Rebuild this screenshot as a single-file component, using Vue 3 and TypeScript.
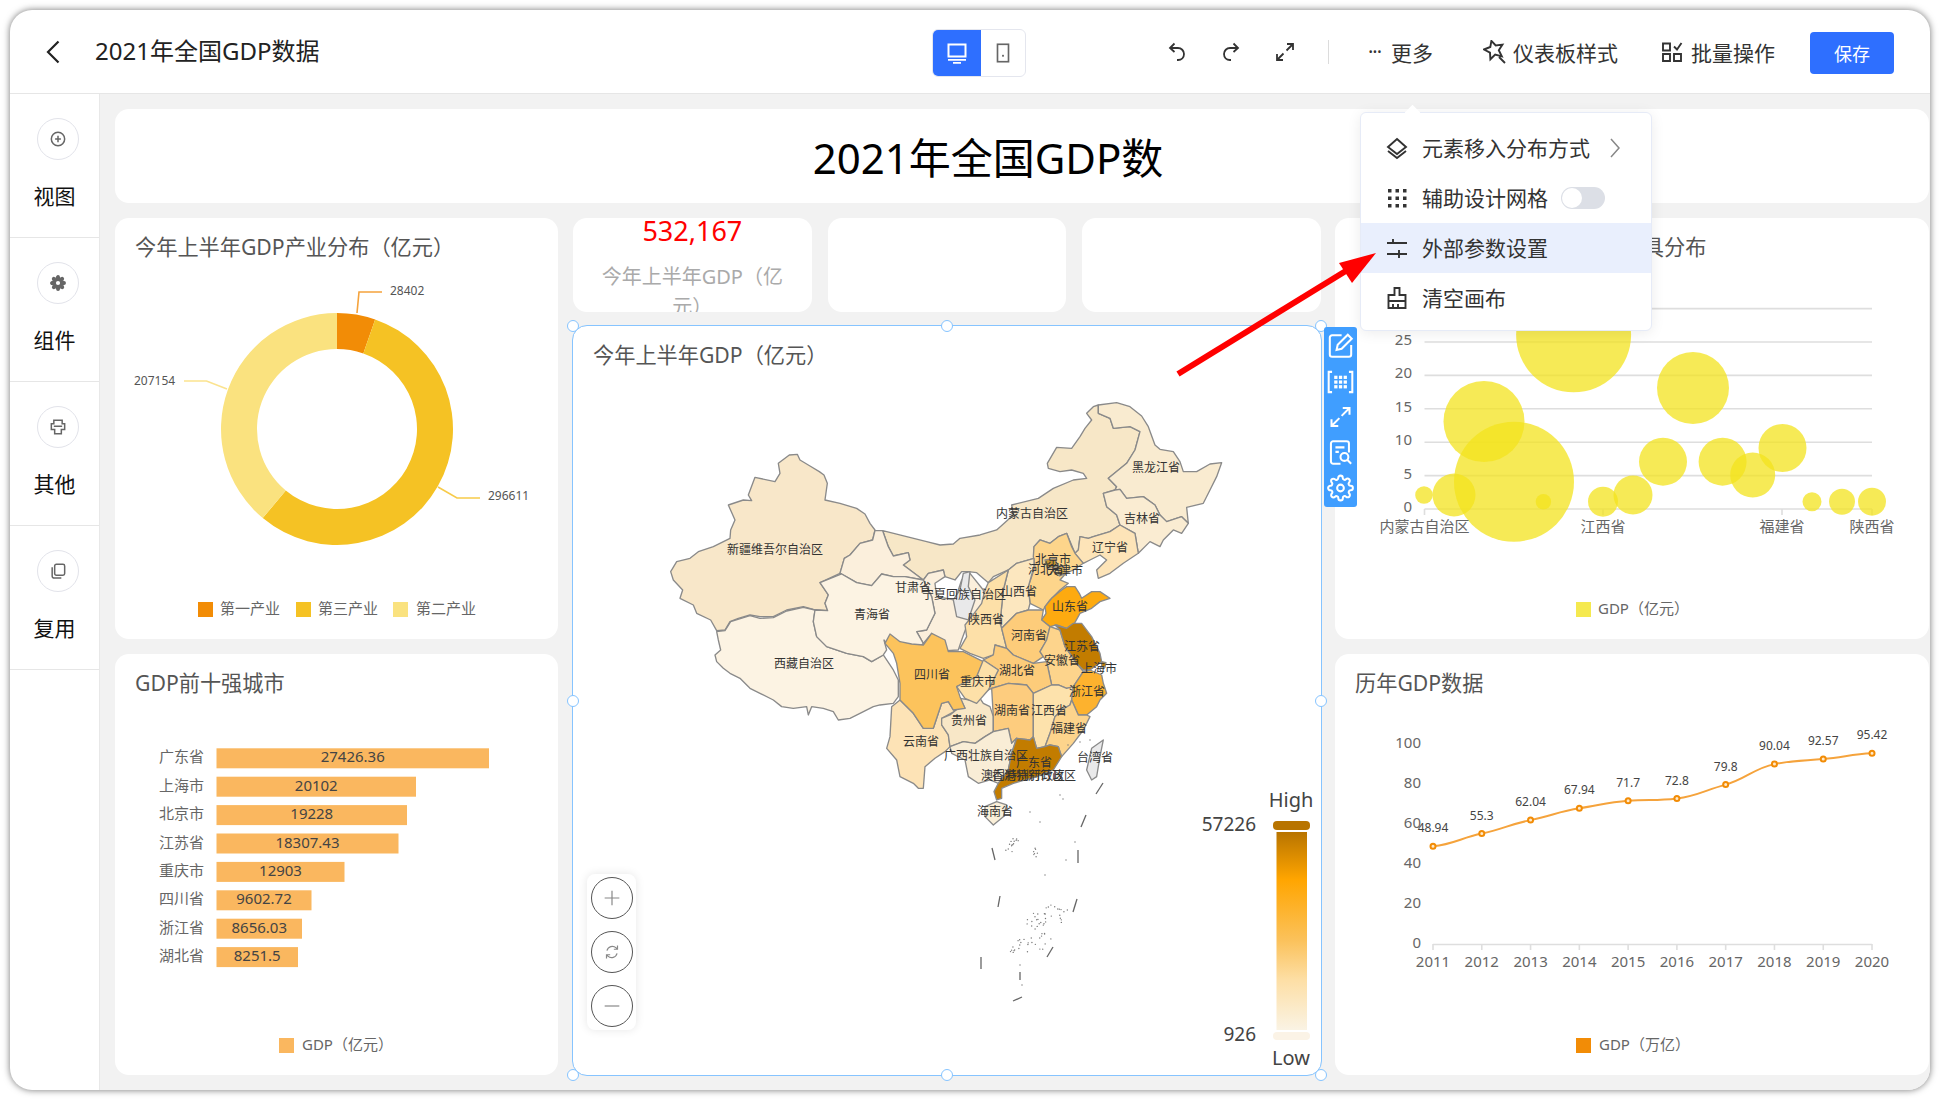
<script setup lang="ts">
type Poly = { g: 'w' | 'n' | 's'; fill: string; pts: string }

const groupTransform: Record<string, string> = {
  w: 'translate(660 440) scale(.3333)',
  n: 'translate(960 390) scale(.3333)',
  s: 'translate(870 620) scale(.3333)',
}

const polys: Poly[] = [
  { g: 'n', fill: '#f7e7c7', pts: '-232,422 -160,440 -100,455 -60,465 -20,462 0,445 60,435 110,420 160,375 155,345 235,325 280,295 340,270 380,265 370,250 335,240 300,245 265,235 262,220 290,172 335,175 360,140 375,115 395,90 380,70 400,50 415,45 415,70 450,85 460,115 510,110 540,125 525,180 500,220 445,265 470,290 465,300 430,310 440,350 470,375 480,405 450,425 400,440 385,445 360,440 355,480 345,490 320,430 295,440 270,460 240,450 222,470 222,505 170,520 145,540 100,560 85,578 50,548 25,545 5,545 -15,570 -45,560 -50,540 -95,550 -110,570 -170,525 -150,510 -155,488 -200,498 -215,470' },
  { g: 'w', fill: '#f8e7c9', pts: '388,45 412,43 420,60 450,78 478,95 492,105 502,130 495,180 540,190 590,205 615,222 630,250 645,270 638,300 600,310 570,345 553,355 540,400 480,428 505,465 495,490 503,512 460,508 430,500 380,510 340,530 300,530 270,525 235,535 210,545 195,570 170,572 152,540 110,520 100,495 60,475 68,450 40,420 32,395 50,365 90,355 115,335 160,320 210,295 212,270 225,240 205,195 250,180 275,182 265,165 285,112 345,125 360,100 355,70' },
  { g: 'w', fill: '#fcf3e3', pts: '170,575 195,572 212,545 270,527 300,535 340,533 380,513 430,502 465,510 460,545 470,590 500,620 560,640 610,650 635,665 670,645 700,690 715,720 715,770 700,790 660,795 640,800 600,820 570,835 535,840 520,815 490,805 455,800 445,825 440,800 400,805 365,800 340,780 300,760 270,745 240,715 210,700 190,685 170,665 165,645 182,630 175,600' },
  { g: 'w', fill: '#fbefdc', pts: '645,272 668,272 685,320 700,348 745,338 750,360 730,375 790,420 805,400 850,390 855,410 825,430 830,470 885,480 905,420 930,400 970,450 980,520 925,545 905,600 895,630 860,632 830,600 815,580 790,610 770,575 800,570 825,520 815,470 790,420 735,410 700,410 665,402 635,437 590,428 545,402 540,400 553,355 570,345 600,310 638,300' },
  { g: 'w', fill: '#fcf3e3', pts: '480,428 545,402 590,428 635,437 665,402 700,410 735,410 790,420 815,470 825,520 800,570 770,575 790,610 770,632 745,630 690,625 672,600 680,630 670,645 635,665 610,650 560,640 500,620 470,590 460,545 465,510 503,512 495,490 505,465' },
  { g: 'n', fill: '#f9ebd0', pts: '415,45 470,38 510,50 545,78 565,110 585,165 600,178 640,185 660,215 670,245 710,245 750,222 785,218 770,260 750,300 730,340 680,352 685,400 665,380 620,395 600,375 585,345 550,320 500,325 480,298 465,300 470,290 445,265 500,220 525,180 540,125 510,110 460,115 450,85 415,70' },
  { g: 'n', fill: '#faecd2', pts: '430,310 465,300 480,298 500,325 550,320 585,345 600,375 620,395 665,380 685,400 665,430 640,420 610,450 600,470 570,455 535,490 525,430 480,405 470,375 440,350' },
  { g: 'n', fill: '#fde4b8', pts: '480,405 525,430 535,490 490,520 450,550 415,565 410,540 440,510 420,495 390,510 370,520 345,490 355,480 360,440 385,445 400,440 450,425' },
  { g: 'n', fill: '#fdd58b', pts: '222,470 240,450 270,460 295,440 320,430 335,470 345,490 370,520 340,540 318,550 300,570 325,580 300,600 270,630 255,650 250,660 210,640 205,590 225,530 220,500' },
  { g: 'n', fill: '#fce7bf', pts: '145,540 170,520 222,505 222,530 205,590 210,640 205,660 170,670 125,715 120,700 125,650 130,600' },
  { g: 's', fill: '#fde0a8', pts: '355,-112 415,-150 400,-90 395,-40 390,10 395,25 410,85 375,75 370,105 340,115 300,100 270,85 290,50 285,15 305,-10 335,-50 345,-90' },
  { g: 'w', fill: '#e9e9ea', pts: '910,400 930,395 925,440 945,480 925,540 890,530 880,480 900,450' },
  { g: 'n', fill: '#fdaa10', pts: '255,650 275,625 305,600 320,590 345,590 358,610 365,625 395,605 420,605 450,625 420,635 395,655 360,670 335,715 320,715 290,705 270,710 245,690 258,670' },
  { g: 's', fill: '#fdcc7a', pts: '395,25 440,-20 475,-30 520,-30 515,0 540,20 530,60 510,95 520,110 490,130 430,105 410,85' },
  { g: 's', fill: '#fdd48c', pts: '530,60 540,20 570,30 585,80 620,130 640,155 610,200 590,205 565,195 545,195 530,125 520,110 510,95' },
  { g: 's', fill: '#c27c00', pts: '555,15 590,25 610,10 635,10 665,50 690,100 695,125 660,150 640,150 620,130 600,100 585,80 570,30' },
  { g: 's', fill: '#fdcc7a', pts: '370,105 375,75 410,85 430,105 490,130 530,125 545,195 490,220 470,195 415,190 365,205 355,210 385,150 340,120' },
  { g: 's', fill: '#fde3b6', pts: '65,260 90,240 130,280 160,325 190,325 215,250 235,245 250,270 265,268 215,295 215,315 235,345 240,380 225,395 195,415 165,440 160,505 145,505 130,490 90,470 80,420 50,385 60,350' },
  { g: 's', fill: '#f8e7c7', pts: '215,295 240,285 265,265 285,265 270,235 300,240 320,220 340,250 360,260 370,290 370,335 345,350 315,370 280,365 240,380 235,345 215,315' },
  { g: 's', fill: '#fcc35c', pts: '45,70 60,42 90,65 125,72 160,75 185,40 225,60 235,95 280,95 340,125 320,170 300,180 260,200 270,230 285,265 250,270 235,245 215,250 190,325 160,325 130,280 90,240 90,190 80,130 70,100' },
  { g: 's', fill: '#fde0a8', pts: '340,120 385,150 355,210 320,250 285,235 260,200 300,180 320,170' },
  { g: 's', fill: '#fdcc7e', pts: '365,205 415,190 470,195 490,220 490,290 490,350 480,360 440,355 425,370 415,325 370,335 370,290' },
  { g: 's', fill: '#fde2ac', pts: '490,220 545,195 565,195 590,205 610,200 605,240 600,255 575,270 555,290 540,340 525,380 500,385 490,350 490,290' },
  { g: 's', fill: '#fdb22e', pts: '640,155 660,150 695,165 700,190 710,220 690,240 680,260 650,285 625,285 605,240 610,200' },
  { g: 's', fill: '#fdd48c', pts: '605,240 625,285 650,285 660,290 640,330 610,370 575,410 565,380 540,375 525,380 540,340 555,290 575,270 600,255' },
  { g: 's', fill: '#f9edd6', pts: '240,380 280,365 315,370 345,350 370,335 415,325 425,370 440,355 425,400 415,450 385,490 360,480 325,490 295,470 285,420 245,400' },
  { g: 's', fill: '#c27c00', pts: '440,355 480,360 490,350 500,385 525,380 540,375 565,380 575,410 550,450 500,470 430,490 395,505 395,535 380,540 372,515 385,490 415,450 425,400' },
  { g: 's', fill: '#faefd8', pts: '345,560 380,545 410,555 400,590 370,615 345,590' },
  { g: 's', fill: '#e9e9ea', pts: '665,385 700,360 690,410 680,470 665,480 650,450' },
  { g: 's', fill: '#c27c00', pts: '695,125 708,128 705,142 695,140' },
  { g: 'n', fill: '#c9962f', pts: '255,510 285,505 292,530 262,535' },
  { g: 'n', fill: '#d9a84a', pts: '292,528 312,530 316,552 298,558' },
]

const mapLabels: [string, number, number][] = [
  ['新疆维吾尔自治区', 775, 550], ['西藏自治区', 804, 664], ['青海省', 872, 615], ['甘肃省', 913, 588],
  ['宁夏回族自治区', 964, 595], ['山西省', 1019, 592], ['陕西省', 986, 620], ['内蒙古自治区', 1032, 514],
  ['黑龙江省', 1156, 468], ['吉林省', 1142, 519], ['辽宁省', 1110, 548], ['北京市', 1053, 560],
  ['河北省', 1046, 570], ['天津市', 1065, 571], ['山东省', 1070, 607], ['河南省', 1029, 636],
  ['江苏省', 1082, 647], ['安徽省', 1062, 661], ['上海市', 1099, 669], ['四川省', 932, 675],
  ['重庆市', 978, 682], ['湖北省', 1017, 671], ['浙江省', 1087, 692], ['湖南省', 1012, 711],
  ['江西省', 1049, 711], ['贵州省', 969, 721], ['福建省', 1069, 729], ['云南省', 921, 742],
  ['广西壮族自治区', 986, 756], ['广东省', 1034, 763], ['台湾省', 1095, 758], ['澳门特别行政区', 1023, 776],
  ['香港特别行政区', 1034, 776], ['海南省', 995, 812],
]

const dashes: number[][] = [
  [1103, 783, 1096, 794], [1086, 815, 1081, 827], [1078, 850, 1078, 863], [1077, 899, 1073, 912],
  [1053, 947, 1047, 957], [981, 957, 981, 969], [992, 848, 995, 860], [1000, 896, 998, 907],
  [1013, 1001, 1022, 997], [1020, 972, 1020, 980],
]

function cluster(x0: number, y0: number, w: number, h: number, n: number, seed: number): number[][] {
  const out: number[][] = []
  let s = seed
  for (let i = 0; i < n; i++) {
    s = (s * 9301 + 49297) % 233280
    const a = s / 233280
    s = (s * 9301 + 49297) % 233280
    const b = s / 233280
    out.push([x0 + a * w - (b * h) * 0.55, y0 + b * h])
  }
  return out
}
const dots = [
  ...cluster(1012, 838, 8, 14, 14, 7),
  ...cluster(1034, 848, 8, 9, 7, 31),
  ...cluster(1035, 905, 36, 48, 60, 17),
  [1075, 842], [1066, 860], [1045, 875], [1020, 965], [1022, 985],
  [1060, 795], [1063, 799], [1030, 812], [1040, 822], [1068, 745], [1080, 742], [1090, 740],
]

const donutC = { x: 337, y: 429, R: 116, r: 80 }
function arc(a0: number, a1: number): string {
  const { x, y, R, r } = donutC
  const p = (rad: number, a: number) => {
    const t = ((a - 90) * Math.PI) / 180
    return `${(x + rad * Math.cos(t)).toFixed(2)} ${(y + rad * Math.sin(t)).toFixed(2)}`
  }
  const large = a1 - a0 > 180 ? 1 : 0
  return `M${p(R, a0)}A${R} ${R} 0 ${large} 1 ${p(R, a1)}L${p(r, a1)}A${r} ${r} 0 ${large} 0 ${p(r, a0)}Z`
}
const donut = [
  { d: arc(0, 19.2), fill: '#f28c06' },
  { d: arc(19.2, 219.8), fill: '#f5c224' },
  { d: arc(219.8, 360), fill: '#fae27f' },
]

const bars = [
  { name: '广东省', value: '27426.36', right: 489 },
  { name: '上海市', value: '20102', right: 416 },
  { name: '北京市', value: '19228', right: 407 },
  { name: '江苏省', value: '18307.43', right: 398.5 },
  { name: '重庆市', value: '12903', right: 344.5 },
  { name: '四川省', value: '9602.72', right: 311.5 },
  { name: '浙江省', value: '8656.03', right: 302 },
  { name: '湖北省', value: '8251.5', right: 298 },
].map((b, i) => ({ ...b, y: 748.3 + i * 28.4, x: 216.5, w: b.right - 216.5 }))

const bubbleY = [0, 5, 10, 15, 20, 25, 30].map((v) => ({ v, y: 509 - v * 6.68 }))
const bubbles: [number, number, number][] = [
  [1424, 495, 8.8], [1454, 495, 21.5], [1514, 481.7, 60], [1484, 421.5, 40.5], [1573.6, 334.8, 57.5],
  [1543.4, 501.7, 7.7], [1603, 501.7, 15], [1633, 495, 19.5], [1663, 461.7, 24], [1693, 388, 36],
  [1722.6, 461.7, 24], [1752.7, 475, 22.5], [1782.5, 448, 24], [1812, 501.7, 9.5], [1842, 501.7, 13], [1872, 501.7, 14],
]
const bubbleX = [
  { t: '内蒙古自治区', x: 1424.5 }, { t: '江西省', x: 1603 }, { t: '福建省', x: 1782 }, { t: '陕西省', x: 1872 },
]

const years = [
  [2011, 48.94], [2012, 55.3], [2013, 62.04], [2014, 67.94], [2015, 71.7],
  [2016, 72.8], [2017, 79.8], [2018, 90.04], [2019, 92.57], [2020, 95.42],
].map(([year, v], i) => ({ year, v, x: 1433 + i * 48.78, y: 944.2 - 2 * v }))

const linePath = years.reduce((acc, p, i) => {
  if (i === 0) return `M${p.x} ${p.y}`
  const prev = years[i - 1]
  const before = years[i - 2] ?? prev
  const next = years[i + 1] ?? p
  const c1y = prev.y + (p.y - before.y) * 0.16
  const c2y = p.y - (next.y - prev.y) * 0.16
  const dx = (p.x - prev.x) / 2.4
  return `${acc}C${prev.x + dx} ${c1y} ${p.x - dx} ${c2y} ${p.x} ${p.y}`
}, '')

const lineYAxis = [0, 20, 40, 60, 80, 100].map((v) => ({ v, y: 942.7 - v * 2 }))

const sideItems = ['视图', '组件', '其他', '复用']
const handles = [
  { l: '0%', t: '0%' }, { l: '50%', t: '0%' }, { l: '100%', t: '0%' },
  { l: '0%', t: '50%' }, { l: '100%', t: '50%' },
  { l: '0%', t: '100%' }, { l: '50%', t: '100%' }, { l: '100%', t: '100%' },
]
const gridSquares = [6.4, 10.6, 14.8].flatMap((y) => [6.4, 10.6, 14.8].map((x) => ({ x, y })))
const gearPath =
  'M19.4 15a1.65 1.65 0 0 0 .33 1.82l.06.06a2 2 0 0 1 0 2.83 2 2 0 0 1-2.83 0l-.06-.06a1.65 1.65 0 0 0-1.82-.33 1.65 1.65 0 0 0-1 1.51V21a2 2 0 0 1-2 2 2 2 0 0 1-2-2v-.09A1.65 1.65 0 0 0 9 19.4a1.65 1.65 0 0 0-1.82.33l-.06.06a2 2 0 0 1-2.83 0 2 2 0 0 1 0-2.83l.06-.06a1.65 1.65 0 0 0 .33-1.82 1.65 1.65 0 0 0-1.51-1H3a2 2 0 0 1-2-2 2 2 0 0 1 2-2h.09A1.65 1.65 0 0 0 4.6 9a1.65 1.65 0 0 0-.33-1.82l-.06-.06a2 2 0 0 1 0-2.83 2 2 0 0 1 2.83 0l.06.06a1.65 1.65 0 0 0 1.82.33H9a1.65 1.65 0 0 0 1-1.51V3a2 2 0 0 1 2-2 2 2 0 0 1 2 2v.09a1.65 1.65 0 0 0 1 1.51 1.65 1.65 0 0 0 1.82-.33l.06-.06a2 2 0 0 1 2.83 0 2 2 0 0 1 0 2.83l-.06.06a1.65 1.65 0 0 0-.33 1.82V9a1.65 1.65 0 0 0 1.51 1H21a2 2 0 0 1 2 2 2 2 0 0 1-2 2h-.09a1.65 1.65 0 0 0-1.51 1z'
</script>

<template>
  <div class="window">
    <header class="header">
      <div class="head-left">
        <svg class="back" viewBox="0 0 14 24"><path d="M12.5 1.5 2 12l10.5 10.5" /></svg>
        <span class="doc-title">2021年全国GDP数据</span>
      </div>
      <div class="device">
        <div class="device-on">
          <svg viewBox="0 0 24 24" width="24" height="24"><path d="M3.5 3.5h17v12h-17z" fill="none" stroke="#fff" stroke-width="2" /><path d="M3 18h18v1.800H3zM8 21h8v1.800H8z" fill="#fff" /></svg>
        </div>
        <div class="device-off">
          <svg viewBox="0 0 24 24" width="22" height="22"><rect x="6" y="2.500" width="12" height="19" fill="none" stroke="#666" stroke-width="1.800" /><rect x="11" y="14" width="2" height="2" fill="#666" /></svg>
        </div>
      </div>
      <div class="tools">
        <svg class="tool" viewBox="0 0 24 24"><path d="M9.500 3.500 5 8l4.500 4M5.500 8H13a6 6 0 0 1 6 6c0 3.500-2.500 6-6 6h-1" /></svg>
        <svg class="tool" viewBox="0 0 24 24"><path d="M14.500 3.500 19 8l-4.500 4M18.500 8H11a6 6 0 0 0-6 6c0 3.500 2.500 6 6 6h1" /></svg>
        <svg class="tool" viewBox="0 0 24 24"><path d="M14 4h6v6M20 4l-6.500 6.500M10 20H4v-6M4 20l6.500-6.500" /></svg>
      </div>
      <div class="divider"></div>
      <div class="act act-more"><span class="dots">···</span><span>更多</span></div>
      <div class="act act-style">
        <svg class="act-icon" viewBox="0 0 24 24"><path d="M8.400.9 12.700 5.500l6.700-.9-3.600 5.600 3 6.100-6.600-1.700-4.800 4.700-.4-6.700-6-3.100L7.300 7zM16 17l6 6" /></svg>
        <span>仪表板样式</span>
      </div>
      <div class="act act-batch">
        <svg class="act-icon" viewBox="0 0 24 24"><path d="M3 3.500h7v7H3zM3 14h7v7H3zM14 14h7v7h-7zM14 6.500l3 3 4.500-6.500" /></svg>
        <span>批量操作</span>
      </div>
      <button class="save">保存</button>
    </header>

    <div class="body">
      <aside class="side">
        <div v-for="(item, i) in sideItems" :key="item" class="side-item">
          <div class="side-circle">
            <svg viewBox="0 0 24 24" width="20" height="20" class="side-icon">
              <g v-if="i === 0"><circle cx="12" cy="12" r="8" /><path d="M12 8v8M8.500 12h7" /></g>
              <g v-else-if="i === 1"><path :d="gearPath" transform="translate(2.400 2.400) scale(.8)" fill="#666" stroke="#666" /><circle cx="12" cy="12" r="2.500" fill="#fff" stroke="none" /></g>
              <g v-else-if="i === 2"><path d="M7 4h10v4h3v7h-4v5H8v-5H4V8h3zM7 11h10" /></g>
              <g v-else><rect x="8" y="4" width="12" height="13" rx="2" /><path d="M5 7.500V18a2.500 2.500 0 0 0 2.500 2.500H16" /></g>
            </svg>
          </div>
          <div class="side-label">{{ item }}</div>
        </div>
      </aside>

      <main class="canvas">
        <div class="title-card"><h1>2021年全国GDP数</h1></div>
        <div class="columns">
          <div class="col col-side">
            <section class="card">
              <div class="card-title">今年上半年GDP产业分布（亿元）</div>
              <svg class="chart" viewBox="115 276 443 363">
                <path v-for="s in donut" :key="s.fill" :d="s.d" :fill="s.fill" />
                <path d="M357 313 359 292H382" class="lead" stroke="#f5a33c" />
                <path d="M227 389 206.500 381H184" class="lead" stroke="#fbe38f" />
                <path d="M438 487 457 498H480" class="lead" stroke="#f7cb4a" />
                <text x="390" y="295" class="lab">28402</text>
                <text x="134" y="385" class="lab">207154</text>
                <text x="488" y="500" class="lab">296611</text>
                <rect x="198" y="602" width="15" height="15" fill="#f28c06" />
                <text x="220" y="614" class="leg">第一产业</text>
                <rect x="296" y="602" width="15" height="15" fill="#f5c224" />
                <text x="318" y="614" class="leg">第三产业</text>
                <rect x="393" y="602" width="15" height="15" fill="#fae27f" />
                <text x="416" y="614" class="leg">第二产业</text>
              </svg>
            </section>
            <section class="card">
              <div class="card-title">GDP前十强城市</div>
              <svg class="chart" viewBox="115 712 443 363">
                <g v-for="b in bars" :key="b.name">
                  <text :x="204" :y="b.y + 14" class="axis end">{{ b.name }}</text>
                  <rect :x="b.x" :y="b.y" :width="b.w" height="20" fill="#fab75f" />
                  <text :x="b.x + b.w / 2" :y="b.y + 14" class="bar-val">{{ b.value }}</text>
                </g>
                <rect x="279" y="1038" width="15" height="15" fill="#fab75f" />
                <text x="302" y="1050" class="leg">GDP（亿元）</text>
              </svg>
            </section>
          </div>

          <div class="col col-mid">
            <div class="kpis">
              <div class="kpi">
                <div class="kpi-num">532,167</div>
                <div class="kpi-label">今年上半年GDP（亿元）</div>
              </div>
              <div class="kpi"></div>
              <div class="kpi"></div>
            </div>
            <section class="card map-card">
              <div class="card-title">今年上半年GDP（亿元）</div>
              <svg class="map" viewBox="573 384 748 691">
                <defs>
                  <linearGradient id="visual" x1="0" y1="0" x2="0" y2="1">
                    <stop offset="0" stop-color="#b87400" />
                    <stop offset=".24" stop-color="#ffa500" />
                    <stop offset=".55" stop-color="#fbc25c" />
                    <stop offset=".75" stop-color="#fddfa6" />
                    <stop offset="1" stop-color="#faf3e4" />
                  </linearGradient>
                </defs>
                <g v-for="(p, i) in polys" :key="i" :transform="groupTransform[p.g]">
                  <polygon :points="p.pts" :fill="p.fill" class="prov" />
                </g>
                <line v-for="(d, i) in dashes" :key="'d' + i" :x1="d[0]" :y1="d[1]" :x2="d[2]" :y2="d[3]" class="dash" />
                <circle v-for="(d, i) in dots" :key="'c' + i" :cx="d[0]" :cy="d[1]" r=".7" fill="#777" />
                <text v-for="l in mapLabels" :key="l[0]" :x="l[1]" :y="l[2] + 4" class="map-label">{{ l[0] }}</text>
                <text x="1291" y="807" class="vm center">High</text>
                <text x="1256" y="831" class="vm vm-num end">57226</text>
                <rect x="1273" y="821" width="37" height="9" rx="4" fill="#b87400" />
                <rect x="1276.500" y="832" width="30.500" height="198" fill="url(#visual)" />
                <rect x="1273" y="1032" width="37" height="8" rx="4" fill="#fbf3e6" />
                <text x="1256" y="1041" class="vm vm-num end">926</text>
                <text x="1291" y="1065" class="vm center">Low</text>
              </svg>
              <div class="zoom-panel">
                <button class="zoom-btn"><svg viewBox="0 0 24 24" width="22" height="22"><path d="M12 4v16M4 12h16" /></svg></button>
                <button class="zoom-btn"><svg viewBox="0 0 24 24" width="22" height="22"><path d="M6.500 10.500a6 6 0 0 1 10-3l1.500 1.500M17.500 13.500a6 6 0 0 1-10 3L6 15M18 5v4h-4M6 19v-4h4" /></svg></button>
                <button class="zoom-btn"><svg viewBox="0 0 24 24" width="22" height="22"><path d="M4 12h16" /></svg></button>
              </div>
              <span v-for="(h, i) in handles" :key="i" class="handle" :style="{ left: h.l, top: h.t }"></span>
              <div class="strip">
                <svg viewBox="0 0 24 24"><path d="M13 2.500H4.500a2 2 0 0 0-2 2v15a2 2 0 0 0 2 2h15a2 2 0 0 0 2-2V11M8.500 15.500l1-4.500 9-9 3.500 3.500-9 9z" /></svg>
                <svg viewBox="0 0 24 24"><path d="M4.500 3H1.500v18h3M19.500 3h3v18h-3" /><rect v-for="(q, i) in gridSquares" :key="i" :x="q.x" :y="q.y" width="2.900" height="2.900" fill="#fff" stroke="none" /></svg>
                <svg viewBox="0 0 24 24"><path d="M14 4h6v6M20 4l-7 7M10 20H4v-6M4 20l7-7" /></svg>
                <svg viewBox="0 0 24 24"><path d="M12 21.500H5.500a2 2 0 0 1-2-2v-16a2 2 0 0 1 2-2h12a2 2 0 0 1 2 2v8M7.500 7h8M7.500 11h3" /><circle cx="15.500" cy="15.500" r="3.500" /><path d="m18 18 3.500 3.500" /></svg>
                <svg viewBox="0 0 24 24"><circle cx="12" cy="12" r="3" /><path :d="gearPath" /></svg>
              </div>
            </section>
          </div>

          <div class="col col-side col-right">
            <section class="card">
              <div class="card-title title-shift">今年上半年各省人均GDP及工具分布</div>
              <svg class="chart" viewBox="1335 276 594 363">
                <g v-for="t in bubbleY" :key="t.v">
                  <line x1="1424.500" x2="1872" :y1="t.y" :y2="t.y" class="grid" />
                  <text v-if="t.v < 30" x="1412" :y="t.y + 3" class="axis end">{{ t.v }}</text>
                </g>
                <line v-for="t in bubbleX" :key="t.x" :x1="t.x" :x2="t.x" y1="509" y2="515" class="grid" />
                <circle v-for="(b, i) in bubbles" :key="i" :cx="b[0]" :cy="b[1]" :r="b[2]" fill="#f3e31d" fill-opacity=".75" />
                <text v-for="t in bubbleX" :key="t.t" :x="t.x" y="532" class="axis center">{{ t.t }}</text>
                <rect x="1576" y="602" width="15" height="15" fill="#f5e94f" />
                <text x="1598" y="614" class="leg">GDP（亿元）</text>
              </svg>
            </section>
            <section class="card">
              <div class="card-title">历年GDP数据</div>
              <svg class="chart" viewBox="1335 712 594 363">
                <text v-for="t in lineYAxis" :key="t.v" x="1421" :y="t.y + 5" class="axis end">{{ t.v }}</text>
                <line x1="1433" x2="1872" y1="944.500" y2="944.500" class="grid" />
                <g v-for="p in years" :key="p.year">
                  <line :x1="p.x" :x2="p.x" y1="944" y2="950" class="grid" />
                  <text :x="p.x" y="967" class="axis center">{{ p.year }}</text>
                </g>
                <path :d="linePath" fill="none" stroke="#f5a33c" stroke-width="2" />
                <g v-for="p in years" :key="'m' + p.year">
                  <circle :cx="p.x" :cy="p.y" r="2.500" fill="#ffe9c9" stroke="#f28c06" stroke-width="2" />
                  <text :x="p.x" :y="p.y - 14" class="val">{{ p.v }}</text>
                </g>
                <rect x="1576" y="1038" width="15" height="15" fill="#f28c06" />
                <text x="1599" y="1050" class="leg">GDP（万亿）</text>
              </svg>
            </section>
          </div>
        </div>
      </main>
    </div>

    <div class="menu">
      <span class="menu-arrow"></span>
      <div class="menu-item">
        <svg viewBox="0 0 24 24"><path d="m12 3 9 8-9 7-9-7zM3 15l9 7 9-7" /></svg>
        <span>元素移入分布方式</span>
        <svg class="menu-chev" viewBox="0 0 14 24"><path d="M3 3l8 9-8 9" /></svg>
      </div>
      <div class="menu-item">
        <svg viewBox="0 0 24 24" class="solid"><g><rect x="3" y="3" width="3.500" height="3.500" /><rect x="10.500" y="3" width="3.500" height="3.500" /><rect x="18" y="3" width="3.500" height="3.500" /><rect x="3" y="10.500" width="3.500" height="3.500" /><rect x="10.500" y="10.500" width="3.500" height="3.500" /><rect x="18" y="10.500" width="3.500" height="3.500" /><rect x="3" y="18" width="3.500" height="3.500" /><rect x="10.500" y="18" width="3.500" height="3.500" /><rect x="18" y="18" width="3.500" height="3.500" /></g></svg>
        <span>辅助设计网格</span>
        <span class="switch"><i></i></span>
      </div>
      <div class="menu-item active">
        <svg viewBox="0 0 24 24"><path d="M2 7h20M8 3v4M2 18h20M14 14v8" /></svg>
        <span>外部参数设置</span>
      </div>
      <div class="menu-item">
        <svg viewBox="0 0 24 24"><path d="M9.500 2h5v7h6v13h-17V9h6zM3.500 15h17M8 22v-4M13 22v-4" /></svg>
        <span>清空画布</span>
      </div>
    </div>

    <svg class="red-arrow" viewBox="0 0 1940 1100">
      <line x1="1178" y1="374" x2="1349" y2="269" stroke="#ff0000" stroke-width="6" />
      <polygon points="1376,253 1339,263 1352,283" fill="#ff0000" />
    </svg>
  </div>
</template>

<style scoped>
.window {
  position: relative;
  margin: 10px;
  width: 1920px;
  height: 1080px;
  display: flex;
  flex-direction: column;
  background: #fff;
  border-radius: 22px;
  box-shadow: 0 0 7px rgba(0, 0, 0, 0.55);
  overflow: hidden;
  font-family: "Noto Sans", "Noto Sans CJK SC", sans-serif;
  color: #333;
}
.header {
  height: 84px;
  flex: none;
  box-sizing: border-box;
  border-bottom: 1px solid #e6e6e6;
  display: flex;
  align-items: center;
  padding-left: 36px;
}
.head-left {
  width: 886px;
  display: flex;
  align-items: center;
  gap: 35px;
}
.back {
  width: 14px;
  height: 24px;
  fill: none;
  stroke: #222;
  stroke-width: 2.2;
}
.doc-title {
  font-size: 24px;
  color: #222;
  margin-bottom: 5px;
}
.device {
  width: 94px;
  height: 48px;
  display: flex;
  margin-top: 3px;
  border: 1px solid #e4e6ee;
  box-sizing: border-box;
  border-radius: 6px;
  overflow: hidden;
}
.device-on {
  width: 48px;
  background: #2e6fff;
  display: flex;
  align-items: center;
  justify-content: center;
}
.device-off {
  flex: 1;
  display: flex;
  align-items: center;
  justify-content: center;
}
.tools {
  margin-left: 139px;
  display: flex;
  gap: 30px;
}
.tool {
  width: 24px;
  height: 24px;
  fill: none;
  stroke: #333;
  stroke-width: 1.8;
}
.divider {
  margin-left: 31px;
  width: 1px;
  height: 24px;
  background: #dcdcdc;
}
.act {
  display: flex;
  align-items: center;
  font-size: 21px;
  color: #333;
}
.act-more {
  margin-left: 35px;
  gap: 6px;
}
.dots {
  width: 21px;
  font-size: 20px;
  text-align: center;
  letter-spacing: -1px;
}
.act-style {
  margin-left: 50px;
  gap: 6px;
}
.act-batch {
  margin-left: 42px;
  gap: 7px;
}
.act-icon {
  width: 24px;
  height: 24px;
  fill: none;
  stroke: #333;
  stroke-width: 1.9;
}
.save {
  margin-left: 35px;
  margin-top: 3px;
  width: 84px;
  height: 42px;
  border: 0;
  border-radius: 4px;
  background: #2e6fff;
  color: #fff;
  font: 18px "Noto Sans", "Noto Sans CJK SC", sans-serif;
}
.body {
  flex: 1;
  display: flex;
  min-height: 0;
}
.side {
  width: 90px;
  flex: none;
  box-sizing: border-box;
  border-right: 1px solid #e8e8e8;
}
.side-item {
  height: 144px;
  box-sizing: border-box;
  border-bottom: 1px solid #e6e6e6;
  display: flex;
  flex-direction: column;
  align-items: center;
  padding-top: 24px;
}
.side-circle {
  width: 42px;
  height: 42px;
  margin-left: 7px;
  box-sizing: border-box;
  border: 1px solid #e2e3ea;
  border-radius: 50%;
  display: flex;
  align-items: center;
  justify-content: center;
}
.side-icon {
  fill: none;
  stroke: #666;
  stroke-width: 1.8;
}
.side-label {
  margin-top: 21px;
  font-size: 21px;
  line-height: 30px;
  color: #111;
}
.canvas {
  flex: 1;
  min-width: 0;
  background: #f2f2f2;
  box-sizing: border-box;
  padding: 15px 1px 15px 15px;
  display: flex;
  flex-direction: column;
  gap: 15px;
}
.title-card {
  height: 94px;
  flex: none;
  background: #fff;
  border-radius: 14px;
  display: flex;
  align-items: center;
  justify-content: center;
  padding-right: 68px;
}
.title-card h1 {
  margin: 0 0 2px;
  font-size: 42px;
  font-weight: 400;
  color: #000;
}
.columns {
  flex: 1;
  display: flex;
  min-height: 0;
}
.col {
  display: flex;
  flex-direction: column;
  flex: none;
}
.col-side {
  width: 443px;
  gap: 15px;
}
.col-mid {
  width: 748px;
  margin-left: 15px;
  gap: 14px;
}
.col-right {
  width: 594px;
  margin-left: 14px;
}
.card {
  background: #fff;
  border-radius: 14px;
  height: 421px;
  position: relative;
}
.card-title {
  height: 58px;
  line-height: 58px;
  padding-left: 20px;
  font-size: 21.2px;
  color: #555;
  white-space: nowrap;
  overflow: hidden;
}
.title-shift {
  padding-left: 31px;
}
.chart {
  display: block;
  width: 100%;
  height: 363px;
}
.lead {
  fill: none;
  stroke-width: 1.6;
}
.lab {
  font-size: 12px;
  fill: #555;
}
.leg {
  font-size: 15px;
  fill: #666;
}
.axis {
  font-size: 15px;
  fill: #666;
}
.end {
  text-anchor: end;
}
.center {
  text-anchor: middle;
}
.bar-val {
  font-size: 15px;
  fill: #444;
  text-anchor: middle;
}
.grid {
  stroke: #dedede;
  stroke-width: 1.6;
}
.val {
  font-size: 12px;
  fill: #444;
  text-anchor: middle;
}
.kpis {
  display: flex;
  gap: 16px;
  height: 94px;
  flex: none;
}
.kpi {
  flex: 1;
  background: #fff;
  border-radius: 14px;
  overflow: hidden;
  text-align: center;
}
.kpi-num {
  font-size: 27px;
  line-height: 26px;
  color: #ff0000;
}
.kpi-label {
  margin-top: 18px;
  padding: 0 18px;
  font-size: 20px;
  line-height: 30px;
  color: #aaa;
}
.map-card {
  height: 749px;
  outline: 1.5px solid #86c4ff;
}
.map {
  display: block;
  width: 748px;
  height: 691px;
}
.prov {
  stroke: #8a8a8a;
  stroke-width: 4;
  stroke-linejoin: round;
}
.dash {
  stroke: #666;
  stroke-width: 1.3;
}
.map-label {
  font-size: 12px;
  fill: #333;
  text-anchor: middle;
}
.vm {
  font-size: 20px;
  fill: #444;
}
.vm-num {
  font-size: 19px;
}
.zoom-panel {
  position: absolute;
  left: 14px;
  top: 548px;
  width: 49px;
  height: 156px;
  box-sizing: border-box;
  padding: 3px 0;
  display: flex;
  flex-direction: column;
  align-items: center;
  justify-content: space-between;
  background: #fff;
  border-radius: 8px;
  box-shadow: 0 0 10px rgba(0, 0, 0, 0.1);
}
.zoom-btn {
  width: 42px;
  height: 42px;
  padding: 0;
  display: flex;
  align-items: center;
  justify-content: center;
  background: #fff;
  border: 1px solid #555;
  border-radius: 50%;
}
.zoom-btn svg {
  fill: none;
  stroke: #888;
  stroke-width: 1.3;
}
.handle {
  position: absolute;
  width: 12px;
  height: 12px;
  margin: -6px 0 0 -6px;
  box-sizing: border-box;
  background: #fff;
  border: 1.5px solid #86c4ff;
  border-radius: 50%;
}
.strip {
  position: absolute;
  left: 751px;
  top: 1px;
  width: 33px;
  height: 180px;
  box-sizing: border-box;
  padding: 4px 0;
  display: flex;
  flex-direction: column;
  align-items: center;
  justify-content: space-between;
  background: #409eff;
  border-radius: 3px;
  z-index: 2;
}
.strip svg {
  width: 27px;
  height: 30px;
  fill: none;
  stroke: #fff;
  stroke-width: 1.8;
}
.menu {
  position: absolute;
  z-index: 3;
  left: 1350px;
  top: 102px;
  width: 292px;
  height: 219px;
  box-sizing: border-box;
  padding: 10px 0;
  background: #fff;
  border: 1px solid #e6ebf7;
  border-radius: 6px;
  box-shadow: 0 2px 14px rgba(0, 0, 0, 0.08);
}
.menu-arrow {
  position: absolute;
  left: 46px;
  top: -6px;
  width: 11px;
  height: 11px;
  background: #fff;
  transform: rotate(45deg);
}
.menu-item {
  position: relative;
  height: 50px;
  display: flex;
  align-items: center;
  padding-left: 24px;
  gap: 13px;
  font-size: 21px;
  color: #333;
}
.menu-item > span:not(.switch) {
  margin-bottom: 3px;
}
.menu-item svg {
  width: 24px;
  height: 24px;
  fill: none;
  stroke: #333;
  stroke-width: 1.9;
}
.menu-item svg.solid {
  fill: #333;
  stroke: none;
}
.menu-item svg.menu-chev {
  width: 14px;
  stroke: #888;
  stroke-width: 1.5;
  margin-left: 5px;
}
.active {
  background: #e9effd;
}
.switch {
  width: 44px;
  height: 22px;
  background: #dcdfe6;
  border-radius: 11px;
  display: block;
}
.switch i {
  display: block;
  width: 20px;
  height: 20px;
  margin: 1px;
  background: #fff;
  border-radius: 50%;
}
.red-arrow {
  position: absolute;
  z-index: 4;
  left: -10px;
  top: -10px;
  width: 1940px;
  height: 1100px;
  pointer-events: none;
}
</style>

<style>
html,
body {
  margin: 0;
  background: #fff;
  overflow: hidden;
}
</style>
